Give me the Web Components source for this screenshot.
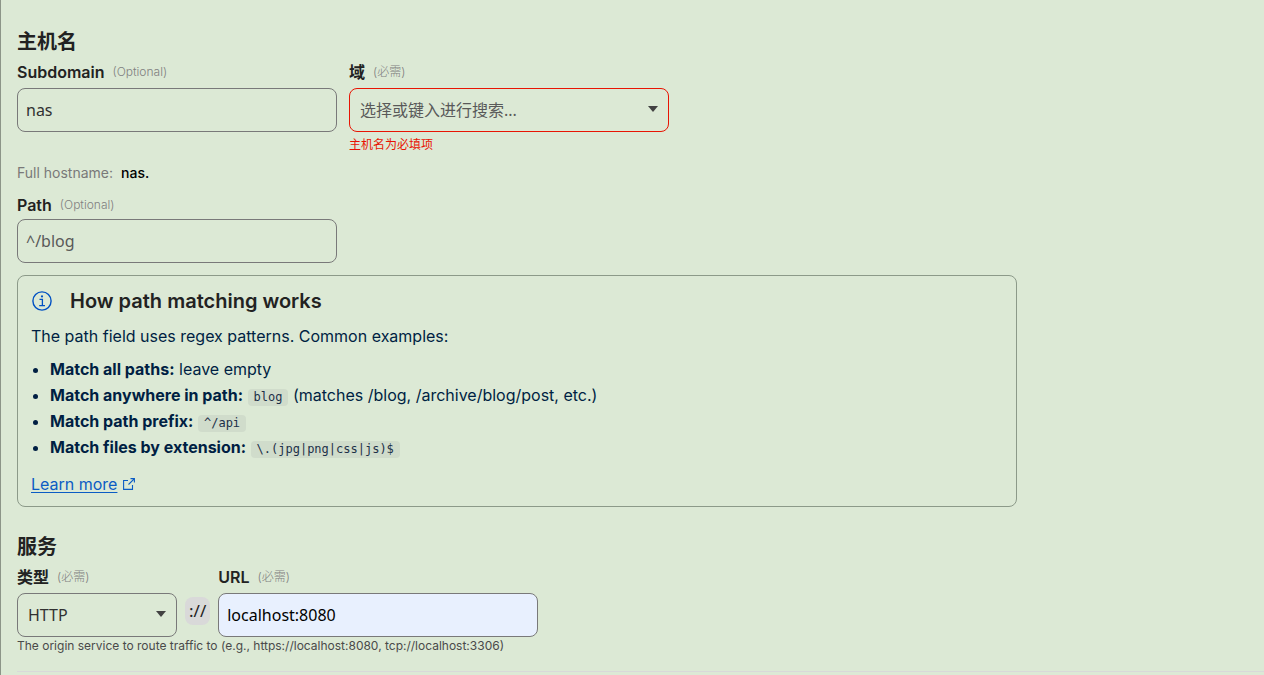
<!DOCTYPE html>
<html lang="zh-CN">
<head>
<meta charset="utf-8">
<meta name="viewport" content="width=device-width, initial-scale=1">
<title>主机名</title>
<style>
  body {
    margin: 0;
    background: #dce9d5;
    color: #222;
    font: 16px/24px Inter, "Noto Sans CJK SC", sans-serif;
    --input-font: "Noto Sans", "Noto Sans CJK SC", sans-serif;
    --line: #797979;
    --danger: #e81403;
  }
</style>
</head>
<body>
<tunnel-form></tunnel-form>
<script>
const define = (name, html, setup) => {
  const template = document.createElement('template');
  template.innerHTML = html;
  customElements.define(name, class extends HTMLElement {
    connectedCallback() {
      if (this.shadowRoot) return;
      this.attachShadow({ mode: 'open' }).append(template.content.cloneNode(true));
      if (setup) setup(this, this.shadowRoot);
    }
  });
};

// Label row, hint and message shared by the text box and the drop-down
const fieldStyle = `
  :host { display: block; width: 320px; max-width: 100%; }
  :host([narrow]) { width: 160px; }
  .head { display: flex; align-items: center; gap: 8px; margin-bottom: 4px; }
  :host([compact]) .head { margin-bottom: 2px; }
  label { font-weight: 600; }
  .hint { font-size: 12px; font-weight: 300; color: #808080; }
  .error { margin: 5px 0 0; font-size: 12px; line-height: 16px; color: var(--danger); }
  .error:empty { display: none; }
  input, select {
    box-sizing: border-box; display: block; width: 100%; height: 44px; margin: 0;
    border: 1px solid var(--line); border-radius: 8px; background: transparent;
    font: 16px/24px var(--input-font); color: #313131; outline: 0;
  }
  :host([invalid]) select { border-color: var(--danger); }`;

const fillHead = (host, root) => {
  root.querySelector('label').textContent = host.getAttribute('label');
  root.querySelector('.hint').textContent = `(${host.getAttribute('hint')})`;
};

define('text-field', `
  <style>${fieldStyle}
    input { padding: 0 8px; }
    input::placeholder { color: #595959; opacity: 1; }
    :host([filled]) input { background: #e8f0fe; color: #000; }
  </style>
  <div class="head"><label for="control"></label><span class="hint"></span></div>
  <input id="control" type="text">`, (host, root) => {
  fillHead(host, root);
  const input = root.querySelector('input');
  input.value = host.getAttribute('value') || '';
  input.placeholder = host.getAttribute('placeholder') || '';
});

define('select-field', `
  <style>${fieldStyle}
    .box { display: grid; align-items: center; }
    .box > * { grid-area: 1 / 1; }
    select { appearance: none; padding: 0 32px 0 10px; }
    :host([invalid]) select { color: #595959; }
    svg { justify-self: end; margin-right: 10px; margin-bottom: 2px; pointer-events: none; }
  </style>
  <div class="head"><label for="control"></label><span class="hint"></span></div>
  <div class="box">
    <select id="control"></select>
    <svg width="12" height="6" viewBox="0 0 12 6" aria-hidden="true"><path d="M1 0h10L6 6z" fill="#424242"/></svg>
  </div>
  <p class="error"></p>`, (host, root) => {
  fillHead(host, root);
  root.querySelector('select').add(new Option(host.getAttribute('value')));
  root.querySelector('.error').textContent = host.getAttribute('error') || '';
});

define('form-section', `
  <style>
    :host { display: block; }
    h2 { margin: 0 0 6px; font-size: 20px; line-height: 24px; font-weight: 700; }
  </style>
  <h2><slot name="title"></slot></h2>
  <slot></slot>`);

define('info-card', `
  <style>
    :host { display: block; box-sizing: border-box; max-width: 1000px; padding: 13px 13px 10px;
      border: 1px solid #8c9a89; border-radius: 8px; color: #001f43; }
    header { display: flex; align-items: center; gap: 18px; }
    h3 { margin: 0; font-size: 20px; line-height: 24px; font-weight: 600; color: #222; }
    svg { flex: none; margin-left: 1px; }
  </style>
  <header>
    <svg width="20" height="20" viewBox="0 0 20 20" fill="none" stroke="#0051c3" aria-hidden="true">
      <circle cx="10" cy="10" r="9.1" stroke-width="1.4"/>
      <path d="M7.5 8.4h2.9v6M7.2 14.6h5.8" stroke-width="1.3"/>
      <circle cx="10" cy="5.4" r="1.1" fill="#0051c3" stroke="none"/>
    </svg>
    <h3><slot name="title"></slot></h3>
  </header>
  <slot></slot>`);

define('code-chip', `
  <style>
    :host { display: inline; }
    code { display: inline-block; padding: 0 6px; border-radius: 4px; background: #d0dccb;
      font: 12px/17px "DejaVu Sans Mono", monospace; color: #1c3048; }
  </style>
  <code><slot></slot></code>`);

define('external-link', `
  <style>
    :host { display: block; }
    a { display: inline-flex; align-items: center; gap: 6px; color: #0b5cc4; text-decoration: none; }
    span { text-decoration: underline; text-underline-offset: 2px; }
    svg { margin-bottom: 1px; }
  </style>
  <a href="#learn-more"><span><slot></slot></span>
    <svg width="12" height="12" viewBox="0 0 12 12" fill="none" stroke="currentColor" stroke-width="1.1" aria-hidden="true">
      <path d="M5 2.5H.6v8.9h8.9V7M7.5.6h3.9v3.9M11.2.8L5.5 6.5"/>
    </svg>
  </a>`);

define('path-help', `
  <style>
    :host { display: block; margin-top: 12px; }
    p { margin: 11px 0 8px; }
    ul { margin: 0 0 12px; padding-left: 19px; }
    li { line-height: 26px; }
    strong { font-weight: 700; }
  </style>
  <info-card>
    <span slot="title">How path matching works</span>
    <p>The path field uses regex patterns. Common examples:</p>
    <ul>
      <li><strong>Match all paths:</strong> leave empty</li>
      <li><strong>Match anywhere in path:</strong> <code-chip>blog</code-chip> (matches /blog, /archive/blog/post, etc.)</li>
      <li><strong>Match path prefix:</strong> <code-chip>^/api</code-chip></li>
      <li><strong>Match files by extension:</strong> <code-chip>\\.(jpg|png|css|js)$</code-chip></li>
    </ul>
    <external-link>Learn more</external-link>
  </info-card>`);

define('tunnel-form', `
  <style>
    :host { display: block; box-sizing: border-box; min-height: 100vh; padding: 30px 0 0 16px; border-left: 1px solid #8c9588; }
    .row { display: flex; flex-wrap: wrap; align-items: flex-start; gap: 12px; }
    .service { gap: 8px; align-items: flex-end; }
    .full { display: flex; gap: 8px; margin: 10px 0; font-size: 14px; line-height: 20px; color: #797979; }
    .full b { font-weight: 500; color: #000; }
    .service-section { margin-top: 28px; }
    .sep { box-sizing: border-box; height: 28px; margin-bottom: 12px; padding: 0 4px; border-radius: 8px;
      background: #d9d9d9; font: 17px/28px var(--input-font); }
    .help { margin: 1px 0 0; font-size: 12px; line-height: 16px; color: #4a4a4a; }
    hr { margin: 17px 0 0; border: 0; border-top: 1px solid #d9d9d9; }
  </style>
  <form-section>
    <span slot="title">主机名</span>
    <div class="row">
      <text-field label="Subdomain" hint="Optional" value="nas"></text-field>
      <select-field label="域" hint="必需" value="选择或键入进行搜索..." error="主机名为必填项" invalid></select-field>
    </div>
    <div class="full"><span>Full hostname:</span><b>nas.</b></div>
    <text-field label="Path" hint="Optional" placeholder="^/blog" compact></text-field>
    <path-help></path-help>
  </form-section>
  <form-section class="service-section">
    <span slot="title">服务</span>
    <div class="row service">
      <select-field label="类型" hint="必需" value="HTTP" narrow></select-field>
      <span class="sep">://</span>
      <text-field label="URL" hint="必需" value="localhost:8080" filled></text-field>
    </div>
    <p class="help">The origin service to route traffic to (e.g., https://localhost:8080, tcp://localhost:3306)</p>
  </form-section>
  <hr>`);
</script>
</body>
</html>
